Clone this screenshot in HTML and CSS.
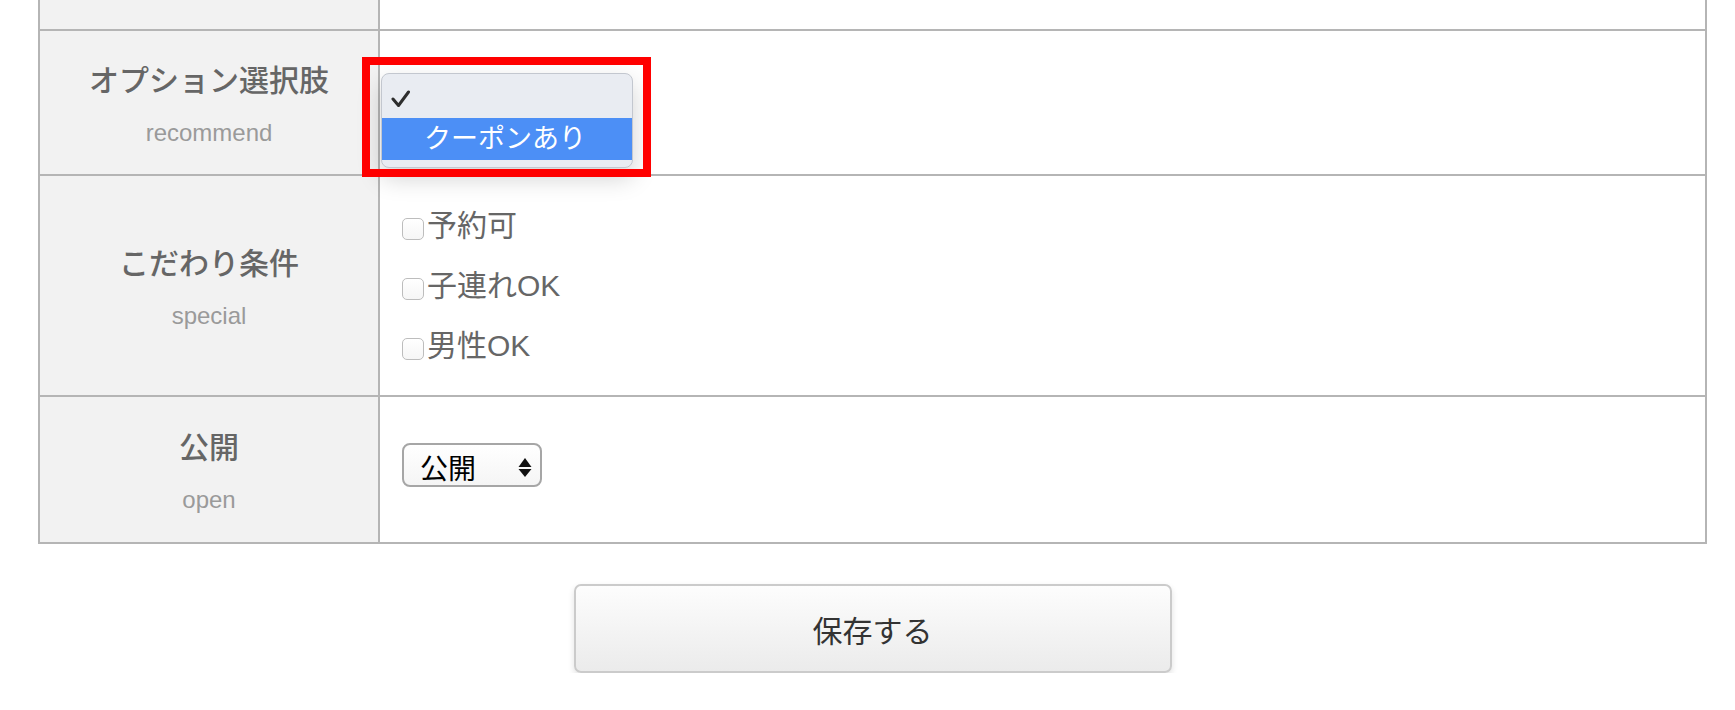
FILE: index.html
```html
<!DOCTYPE html>
<html lang="ja">

<head>
  <meta charset="UTF-8">
  <meta name="viewport" content="width=device-width, initial-scale=1.0">
  <title>店舗情報の編集</title>
  <link rel="stylesheet" href="styles.css">
</head>

<body>
  <div class="edit-container">
    <form id="shopForm">
      <table class="form-table">
        <tr class="row-cut">
          <th></th>
          <td></td>
        </tr>
        <tr class="row-option">
          <th>
            <span class="item-name">オプション選択肢</span>
            <span class="item-sub">recommend</span>
          </th>
          <td class="option-cell">
            <!-- opened select menu -->
            <div class="select-menu">
              <div class="menu-item menu-checked">
                <svg class="menu-check" width="20" height="19" viewBox="0 0 20 19">
                  <path d="M3 10 L8.5 16.5 L18.5 3" fill="none" stroke="#2e2e2e" stroke-width="3" stroke-linecap="round" stroke-linejoin="round" />
                </svg>
              </div>
              <div class="menu-item menu-active">クーポンあり</div>
            </div>
            <div class="mark-frame"></div>
          </td>
        </tr>
        <tr class="row-special">
          <th>
            <span class="item-name">こだわり条件</span>
            <span class="item-sub">special</span>
          </th>
          <td class="check-cell">
            <label class="check-item"><input type="checkbox" name="special" value="reserve">予約可</label>
            <label class="check-item"><input type="checkbox" name="special" value="kids">子連れOK</label>
            <label class="check-item"><input type="checkbox" name="special" value="men">男性OK</label>
          </td>
        </tr>
        <tr class="row-open">
          <th>
            <span class="item-name">公開</span>
            <span class="item-sub">open</span>
          </th>
          <td class="open-cell">
            <div class="select-wrap">
              <select name="open" class="select-box">
                <option value="1">公開</option>
                <option value="0">非公開</option>
              </select>
              <svg class="select-arrows" width="14" height="19" viewBox="0 0 14 19">
                <polygon points="7,0 13.5,9 0.5,9" fill="#111" />
                <polygon points="0.5,11 13.5,11 7,19" fill="#111" />
              </svg>
            </div>
          </td>
        </tr>
      </table>

      <button type="submit" class="btn-save">保存する</button>
    </form>
  </div>
</body>

</html>
```

FILE: styles.css
```css
body {
  margin: 0;
  padding: 0;
  font-family: "Liberation Sans", "Noto Sans CJK JP", sans-serif;
  color: #666;
  background: #fff;
}

.edit-container {
  width: 1669px;
  margin-left: 38px;
}

.form-table {
  width: 100%;
  table-layout: fixed;
  border-collapse: separate;
  border-spacing: 0;
  border-left: 2px solid #b5b5b5;
}

.form-table th,
.form-table td {
  padding: 0;
  border-right: 2px solid #b5b5b5;
  border-bottom: 2px solid #b5b5b5;
}

.form-table th {
  width: 338px;
  padding-top: 4px;
  background: #f2f2f2;
  font-weight: normal;
  text-align: center;
  vertical-align: middle;
}

.row-cut {
  height: 31px;
}

.row-option {
  height: 145px;
}

.row-special {
  height: 221px;
}

.row-open {
  height: 147px;
}

.item-name {
  display: block;
  font-size: 30px;
  font-weight: 500;
  line-height: 40px;
  color: #666;
}

.item-sub {
  display: block;
  margin-top: 16px;
  font-size: 24px;
  line-height: 32px;
  color: #9a9a9a;
}

/* opened dropdown */
.form-table .option-cell {
  position: relative;
}

.select-menu {
  position: absolute;
  left: 1px;
  top: 42px;
  width: 252px;
  height: 95px;
  box-sizing: border-box;
  padding-bottom: 7px;
  background: #e9ecf2;
  border: 1px solid #c3c7cf;
  border-radius: 8px;
  box-shadow: 0 10px 24px rgba(0, 0, 0, 0.18);
  overflow: hidden;
}

.menu-item {
  box-sizing: border-box;
}

.menu-checked {
  height: 44px;
  padding: 15px 0 0 8px;
}

.menu-check {
  display: block;
}

.menu-active {
  height: 42px;
  padding-left: 42px;
  background: #4c8ff6;
  color: #fff;
  font-size: 27px;
  line-height: 42px;
}

.mark-frame {
  position: absolute;
  left: -18px;
  top: 26px;
  width: 289px;
  height: 120px;
  box-sizing: border-box;
  border: 8px solid #ff0000;
  pointer-events: none;
}

/* checkboxes */
.form-table .check-cell {
  padding-left: 22px;
  vertical-align: middle;
}

.check-item {
  display: block;
  font-size: 30px;
  line-height: 60px;
  color: #666;
}

.check-item input {
  appearance: none;
  -webkit-appearance: none;
  width: 22px;
  height: 22px;
  margin: 0 3px 0 0;
  border: 1px solid #bdbdbd;
  border-radius: 5px;
  background: linear-gradient(#fff, #f6f6f6);
  vertical-align: -4px;
}

/* open select */
.form-table .open-cell {
  padding: 0 0 9px 22px;
  vertical-align: middle;
}

.select-wrap {
  position: relative;
  display: inline-block;
  vertical-align: top;
}

.select-box {
  appearance: none;
  -webkit-appearance: none;
  display: block;
  width: 140px;
  height: 44px;
  margin: 0;
  padding: 8px 0 0 16px;
  border: 2px solid #a6a6a6;
  border-radius: 8px;
  background: linear-gradient(#fff, #f5f5f5);
  font-family: inherit;
  font-size: 28px;
  color: #000;
}

.select-arrows {
  position: absolute;
  left: 116px;
  top: 15px;
  pointer-events: none;
}

.btn-save {
  display: block;
  width: 598px;
  height: 89px;
  margin: 40px auto 0;
  border: 2px solid #cbcbcb;
  border-radius: 7px;
  background: linear-gradient(#fdfdfd, #ebebeb);
  box-shadow: 0 3px 6px rgba(0, 0, 0, 0.12);
  font-family: inherit;
  font-size: 30px;
  color: #333;
}
```
